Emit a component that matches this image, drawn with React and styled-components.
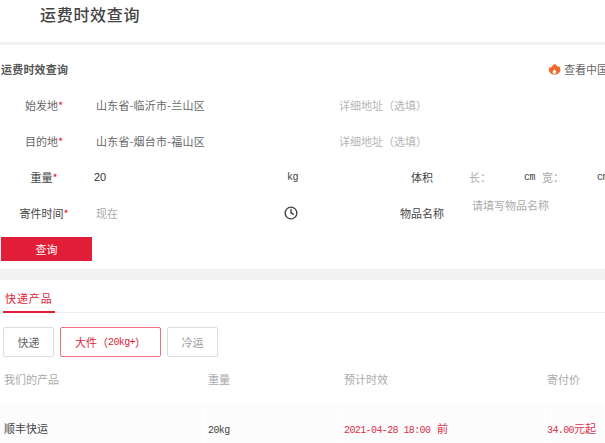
import React from 'react'
import styled, { createGlobalStyle } from 'styled-components'
import { Clock } from 'lucide-react'

const red = '#e21d37'
const cjk = '"Noto Sans CJK SC", "Liberation Sans", sans-serif'
const mono = '"Liberation Mono", "Noto Sans CJK SC", monospace'

const GlobalStyle = createGlobalStyle`
html, body {
  margin: 0;
  padding: 0;
  background: #fff;
  overflow: hidden;
}
body {
  font-family: ${cjk};
  font-size: 11px;
  color: #555;
}
`

const Page = styled.div`
width: 605px;
height: 443px;
overflow: hidden;
`

const TitleBar = styled.div`
height: 42px;
padding: 3px 0 0 40px;
box-sizing: border-box;
font-size: 16px;
line-height: 23px;
font-weight: 500;
letter-spacing: 0.7px;
color: #444;
`

const Band = styled.div`
height: ${props => props.$h}px;
background: #f2f2f2;
`

const FormHead = styled.div`
display: flex;
justify-content: space-between;
align-items: center;
height: 24px;
margin-top: 12px;
padding-left: 1px;
white-space: nowrap;
`

const HeadTitle = styled.div`
font-weight: 700;
font-size: 11px;
letter-spacing: 0.2px;
color: #555;
`

const HeadLink = styled.div`
display: flex;
align-items: center;
gap: 3px;
width: 57px;
overflow: hidden;
flex: none;
font-size: 11px;
color: #666;
`

const Form = styled.div`
display: grid;
grid-template-columns: 88px 251px 39px 88px 139px;
grid-auto-rows: 36px;
margin-top: 6px;
`

const Label = styled.div`
display: flex;
align-items: center;
justify-content: center;
color: ${props => props.$dark ? '#444' : '#666'};
white-space: nowrap;
`

const Star = styled.span`
color: #f01020;
`

const Value = styled.div`
display: flex;
align-items: center;
justify-content: space-between;
padding: 0 41px 0 8px;
letter-spacing: ${props => props.$spread ? 0.2 : 0}px;
color: ${props => props.$muted ? '#aaa' : '#666'};
white-space: nowrap;
`

const Weight = styled.span`
font-family: "Liberation Sans", sans-serif;
font-size: 11px;
color: #333;
margin-left: -2px;
`

const Unit = styled.span`
font-family: ${mono};
font-size: 10px;
letter-spacing: -0.5px;
color: #444;
`

const Detail = styled.div`
grid-column: 3 / span 3;
display: flex;
align-items: center;
color: #b5b5b5;
white-space: nowrap;
`

const Volume = styled.div`
display: grid;
grid-template-columns: 55px 18px 55px 10px;
align-items: center;
padding-left: 3px;
overflow: hidden;
color: #aaa;
white-space: nowrap;
`

const GoodsInput = styled.div`
padding: 1px 0 0 6px;
line-height: 18px;
color: #aaa;
white-space: nowrap;
`

const Submit = styled.button`
display: block;
width: 91px;
height: 24px;
margin: 6px 0 8px 1px;
padding: 0;
border: 0;
background: ${red};
color: #fff;
font-family: ${cjk};
font-size: 11px;
`

const Tabs = styled.div`
display: flex;
height: 31px;
margin-top: 1px;
padding-left: 3px;
border-bottom: 1px solid #eee;
`

const Tab = styled.div`
width: 52px;
margin-bottom: -1px;
padding: 8px 0 0 2px;
box-sizing: border-box;
border-bottom: 2px solid ${red};
line-height: 18px;
letter-spacing: 0.9px;
color: ${red};
`

const Kinds = styled.div`
display: flex;
gap: 6px;
margin: 14px 0 0 3px;
`

const Kind = styled.div`
display: flex;
align-items: center;
justify-content: center;
height: 30px;
width: ${props => props.$w}px;
box-sizing: border-box;
border: 1px solid ${props => props.$on ? '#ef6f80' : '#ddd'};
border-radius: 2px;
color: ${props => props.$on ? red : props.$pale ? '#999' : '#666'};
white-space: nowrap;
`

const Table = styled.div`
display: grid;
grid-template-columns: 205px 137px 203px 60px;
margin-top: 13px;
`

const HeadCell = styled.div`
height: 34px;
padding-left: ${props => props.$pad || 0}px;
line-height: 18px;
color: #aaa;
white-space: nowrap;
`

const Cell = styled.div`
height: 40px;
margin-right: 1px;
padding: 15px 0 0 ${props => props.$pad || 0}px;
box-sizing: border-box;
background: #fcfcfc;
line-height: 18px;
color: ${props => props.$red ? '#d9304a' : '#444'};
white-space: nowrap;
`

const MonoText = styled.span`
font-family: ${mono};
font-size: 10px;
letter-spacing: -0.6px;
margin-right: ${props => props.$gap || 0}px;
`

const Flame = () => (
  <svg width="13" height="13" viewBox="0 0 13 13" style={{ flex: 'none' }}>
    <path d="M7 .5c.5 1.800 2 2 3 3.500.5-.4.600-.9.600-1.300C11.700 4 12.500 5.500 12.500 7.300A6 5.500 0 0 1 1 8c-.6-1.700 0-3.300 1.200-4.300.1.700.3 1.100.8 1.400C3.300 3 5.300 2.500 7 .5z" fill="#ee6a2c" />
    <path d="M6.300 6.300c.4 1 1.900 1.300 1.900 2.800a1.800 1.800 0 0 1-3.600.1c0-1.200 1.300-1.600 1.700-2.900z" fill="#fff" />
  </svg>
)

export default function App() {
  return (
    <Page>
      <GlobalStyle />
      <TitleBar>运费时效查询</TitleBar>
      <Band $h={3} />
      <FormHead>
        <HeadTitle>运费时效查询</HeadTitle>
        <HeadLink><Flame />查看中国</HeadLink>
      </FormHead>
      <Form>
        <Label>始发地<Star>*</Star></Label>
        <Value $spread>山东省-临沂市-兰山区</Value>
        <Detail>详细地址（选填）</Detail>

        <Label>目的地<Star>*</Star></Label>
        <Value $spread>山东省-烟台市-福山区</Value>
        <Detail>详细地址（选填）</Detail>

        <Label $dark>重量<Star>*</Star></Label>
        <Value><Weight>20</Weight><Unit>kg</Unit></Value>
        <div />
        <Label $dark>体积</Label>
        <Volume>
          <span>长：</span><Unit>cm</Unit>
          <span>宽：</span><Unit>cm</Unit>
        </Volume>

        <Label $dark>寄件时间<Star>*</Star></Label>
        <Value $muted>现在<Clock size={14} strokeWidth={2.4} color="#444" /></Value>
        <div />
        <Label $dark>物品名称</Label>
        <GoodsInput>请填写物品名称</GoodsInput>
      </Form>
      <Submit>查询</Submit>
      <Band $h={11} />
      <Tabs><Tab>快递产品</Tab></Tabs>
      <Kinds>
        <Kind $w={51}>快递</Kind>
        <Kind $w={101} $on>大件（<MonoText>20kg+</MonoText>）</Kind>
        <Kind $w={51} $pale>冷运</Kind>
      </Kinds>
      <Table>
        <HeadCell $pad={4}>我们的产品</HeadCell>
        <HeadCell $pad={3}>重量</HeadCell>
        <HeadCell $pad={2}>预计时效</HeadCell>
        <HeadCell $pad={2}>寄付价</HeadCell>
        <Cell $pad={4}>顺丰快运</Cell>
        <Cell $pad={3}><MonoText>20kg</MonoText></Cell>
        <Cell $pad={2} $red><MonoText $gap={4}>2021-04-28 18:00</MonoText> 前</Cell>
        <Cell $pad={2} $red><MonoText>34.00</MonoText>元起</Cell>
      </Table>
    </Page>
  )
}
